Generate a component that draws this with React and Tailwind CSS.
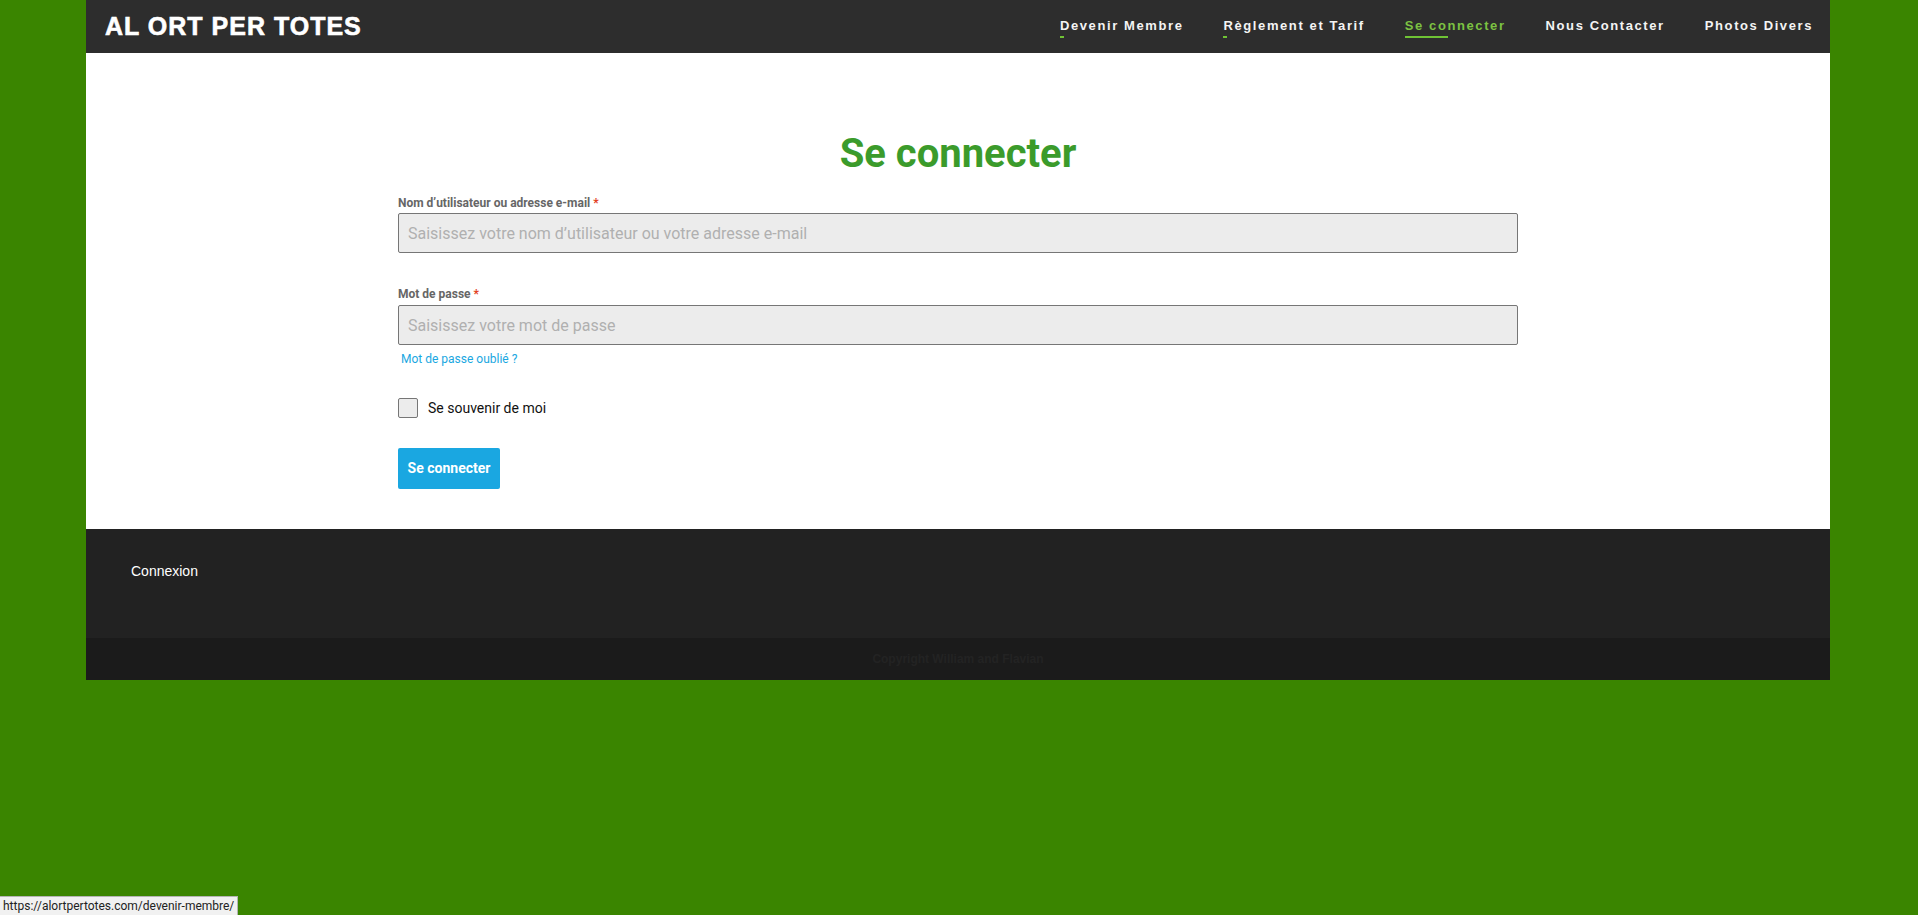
const navItems = [
  { label: "Devenir Membre", bar: "w-[4px]" },
  { label: "Règlement et Tarif", bar: "w-[4px]" },
  { label: "Se connecter", bar: "w-[43px]", active: true },
  { label: "Nous Contacter" },
  { label: "Photos Divers" },
];

function Header() {
  return (
    <header className="flex h-[53px] items-start justify-between bg-[#2d2d2d] pl-[19px] pr-[17px]">
      <a
        href="#"
        className="mt-[11px] text-[25px] font-black uppercase leading-[30px] tracking-[1px] text-white [-webkit-text-stroke:0.6px_white]"
        style={{ fontFamily: '"Liberation Sans", Arial, sans-serif' }}
      >
        AL ORT PER TOTES
      </a>
      <nav className="flex gap-[40px] pt-[16px]" style={{ fontFamily: '"Liberation Sans", Arial, sans-serif' }}>
        {navItems.map((item) => (
          <a key={item.label} href="#" className="flex flex-col">
            <span
              className={
                "text-[13px] font-bold leading-5 tracking-[1.6px] " +
                (item.active ? "text-[#7cc242]" : "text-[#f4f4f4]")
              }
            >
              {item.label}
            </span>
            {item.bar ? (
              <span className={"h-[2px] bg-[#6fc335] " + item.bar}></span>
            ) : (
              <span className="h-[2px]"></span>
            )}
          </a>
        ))}
      </nav>
    </header>
  );
}

function LoginForm() {
  return (
    <main className="bg-white pb-[40px] pt-[77px]" style={{ fontFamily: "Roboto, sans-serif" }}>
      <div className="mx-auto w-[1120px]">
        <h1 className="text-center text-[40px] font-bold leading-[48px] text-[#3b9b2b]">Se connecter</h1>

        <label className="mt-[17px] mb-[2px] block text-[12px] font-bold leading-4 text-[#666]">
          Nom d’utilisateur ou adresse e-mail <span className="text-[#e2401c]">*</span>
        </label>
        <input
          type="text"
          placeholder="Saisissez votre nom d’utilisateur ou votre adresse e-mail"
          className="block h-[40px] w-full rounded-[2px] border border-[#767676] bg-[#ececec] px-[9px] text-[16px] text-[#333] outline-none placeholder:text-[#b0b0b0]"
        />

        <label className="mt-[33px] mb-[3px] block text-[12px] font-bold leading-4 text-[#666]">
          Mot de passe <span className="text-[#e2401c]">*</span>
        </label>
        <input
          type="password"
          placeholder="Saisissez votre mot de passe"
          className="block h-[40px] w-full rounded-[2px] border border-[#767676] bg-[#ececec] px-[9px] text-[16px] text-[#333] outline-none placeholder:text-[#b0b0b0]"
        />
        <a href="#" className="mt-[6px] ml-[3px] block w-fit text-[12px] leading-4 text-[#1aa7e1]">
          Mot de passe oublié ?
        </a>

        <label className="mt-[31px] flex items-center gap-[10px] text-[14px] leading-5 text-[#111]">
          <span className="h-[20px] w-[20px] rounded-[2px] border border-[#767676] bg-[#ececec]"></span>
          Se souvenir de moi
        </label>

        <button
          type="button"
          className="mt-[30px] h-[41px] w-[102px] rounded-[2px] bg-[#1aa7e1] text-[14px] font-bold text-white"
        >
          Se connecter
        </button>
      </div>
    </main>
  );
}

function Footer() {
  return (
    <footer style={{ fontFamily: '"Liberation Sans", Arial, sans-serif' }}>
      <div className="h-[109px] bg-[#222222] pl-[45px] pt-[30px]">
        <a href="#" className="text-[14px] leading-5 text-white">
          Connexion
        </a>
      </div>
      <div className="flex h-[42px] items-center justify-center bg-[#1b1b1b]">
        <p className="text-[12px] font-bold text-[#232323]">Copyright William and Flavian</p>
      </div>
    </footer>
  );
}

export default function App() {
  return (
    <div className="min-h-screen bg-[#3a8500]">
      <div className="ml-[86px] w-[1744px]">
        <Header />
        <LoginForm />
        <Footer />
      </div>
      {/* barre d'état du navigateur */}
      <div
        className="fixed bottom-0 left-0 h-[19px] border-t border-r border-[#b5b5b5] bg-[#f1f1f1] px-[3px] text-[12px] leading-[18px] text-[#222]"
        style={{ fontFamily: "Roboto, sans-serif" }}
      >
        https://alortpertotes.com/devenir-membre/
      </div>
    </div>
  );
}
